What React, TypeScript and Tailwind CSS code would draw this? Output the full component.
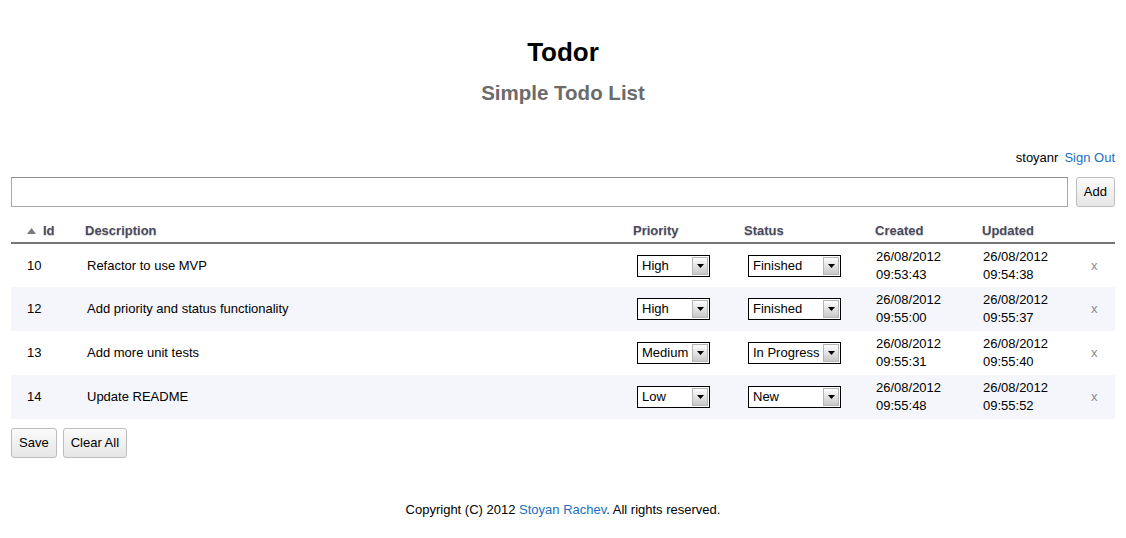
import React from 'react';

interface Todo {
  id: number;
  description: string;
  priority: string;
  status: string;
  created: [string, string];
  updated: [string, string];
}

const todos: Todo[] = [
  { id: 10, description: 'Refactor to use MVP', priority: 'High', status: 'Finished', created: ['26/08/2012', '09:53:43'], updated: ['26/08/2012', '09:54:38'] },
  { id: 12, description: 'Add priority and status functionality', priority: 'High', status: 'Finished', created: ['26/08/2012', '09:55:00'], updated: ['26/08/2012', '09:55:37'] },
  { id: 13, description: 'Add more unit tests', priority: 'Medium', status: 'In Progress', created: ['26/08/2012', '09:55:31'], updated: ['26/08/2012', '09:55:40'] },
  { id: 14, description: 'Update README', priority: 'Low', status: 'New', created: ['26/08/2012', '09:55:48'], updated: ['26/08/2012', '09:55:52'] },
];

const FakeSelect = ({ value, width }: { value: string; width: string }) => (
  <div className={`${width} h-[22px] flex items-stretch border border-black bg-white`}>
    <span className="flex-1 pl-[4px] leading-[20px] whitespace-nowrap overflow-hidden">{value}</span>
    <span className="w-[16px] m-[1px] flex items-center justify-center border border-[#b5b5b5] bg-gradient-to-b from-[#fdfdfd] to-[#c9c9c9]">
      <svg width="7" height="4" viewBox="0 0 7 4">
        <path d="M0 0h7L3.5 4z" fill="#000" />
      </svg>
    </span>
  </div>
);

const Button = ({ children }: { children: React.ReactNode }) => (
  <button className="h-[30px] px-[7px] rounded-[3px] border border-[#bdbdbd] bg-gradient-to-b from-[#fbfbfb] to-[#e6e6e6] text-[13px] text-black">
    {children}
  </button>
);

export default function App() {
  return (
    <div className="min-h-[538px] bg-white px-[11px] text-[13px] text-black font-['Liberation_Sans',Arial,sans-serif]">
      <div className="pt-[37px] text-center">
        <h1 className="text-[26px] font-bold leading-[30px]">Todor</h1>
        <h2 className="mt-[12px] text-[20.5px] font-bold leading-[28px] text-[#6b6b6b]">Simple Todo List</h2>
      </div>

      <div className="mt-[43px] flex justify-end gap-[6px] leading-[16px]">
        <span>stoyanr</span>
        <a className="text-[#1a6fc2]">Sign Out</a>
      </div>

      <div className="mt-[11px] flex gap-[8px]">
        <input className="flex-1 h-[30px] border border-[#a8a8a8] border-t-[#8f8f8f] bg-white outline-none" />
        <Button>Add</Button>
      </div>

      <table className="mt-[5px] w-full table-fixed border-collapse">
        <colgroup>
          <col className="w-[66px]" />
          <col className="w-[550px]" />
          <col className="w-[111px]" />
          <col className="w-[128px]" />
          <col className="w-[107px]" />
          <col className="w-[107px]" />
          <col className="w-[35px]" />
        </colgroup>
        <thead>
          <tr className="border-b-2 border-[#767676] text-left font-bold text-[#4a4a5c] [text-shadow:0_1px_1px_rgba(0,0,0,0.18)] leading-[15px]">
            <th className="pt-[11px] pb-[4px] pl-[16px]">
              <span className="flex items-center gap-[7px]">
                <svg width="9" height="6" viewBox="0 0 9 6">
                  <path d="M4.5 0L9 6H0z" fill="#7a7a84" />
                </svg>
                Id
              </span>
            </th>
            <th className="pt-[11px] pb-[4px] pl-[8px]">Description</th>
            <th className="pt-[11px] pb-[4px] pl-[6px]">Priority</th>
            <th className="pt-[11px] pb-[4px] pl-[6px]">Status</th>
            <th className="pt-[11px] pb-[4px] pl-[9px]">Created</th>
            <th className="pt-[11px] pb-[4px] pl-[9px]">Updated</th>
            <th />
          </tr>
        </thead>
        <tbody>
          {todos.map((todo, i) => (
            <tr key={todo.id} className={`h-[44px] ${i % 2 === 1 ? 'bg-[#f5f6fb]' : 'bg-white'}`}>
              <td className="pl-[16px]">{todo.id}</td>
              <td className="pl-[10px]">{todo.description}</td>
              <td className="pl-[10px]">
                <FakeSelect value={todo.priority} width="w-[73px]" />
              </td>
              <td className="pl-[10px]">
                <FakeSelect value={todo.status} width="w-[93px]" />
              </td>
              <td className="pl-[10px] leading-[18px]">
                {todo.created[0]}
                <br />
                {todo.created[1]}
              </td>
              <td className="pl-[10px] leading-[18px]">
                {todo.updated[0]}
                <br />
                {todo.updated[1]}
              </td>
              <td className="pl-[11px] text-[#8c8c8c]">x</td>
            </tr>
          ))}
        </tbody>
      </table>

      <div className="mt-[9px] flex gap-[6px]">
        <Button>Save</Button>
        <Button>Clear All</Button>
      </div>

      <p className="mt-[44px] text-center leading-[16px]">
        Copyright (C) 2012 <a className="text-[#1a6fc2]">Stoyan Rachev</a>. All rights reserved.
      </p>
    </div>
  );
}
